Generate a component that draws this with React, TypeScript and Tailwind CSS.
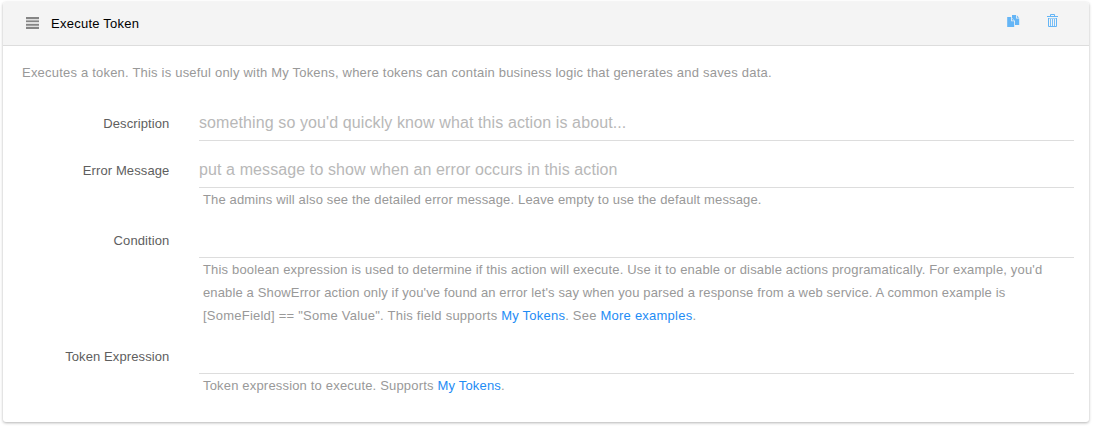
import type { ReactNode } from 'react';

function LinesIcon() {
  return (
    <svg className="mb-px" width="13" height="12" viewBox="0 0 13 12" fill="#858585" shapeRendering="crispEdges">
      <rect width="13" height="12" fill="#dedede" />
      <rect width="13" height="2" />
      <rect y="3" width="13" height="1" fill="#b0b0b0" />
      <rect y="4" width="13" height="1" />
      <rect y="7" width="13" height="1" />
      <rect y="8" width="13" height="1" fill="#a0a0a0" />
      <rect y="10" width="13" height="2" />
    </svg>
  );
}

function CopyIcon() {
  return (
    <svg width="13" height="12" viewBox="0 0 13 12" fill="#64b5f6">
      <path d="M5 0h4v3.5h3.2V10H8V6L5 3z" />
      <path d="M9.8 0.3L12 2.7H9.8z" />
      <path d="M0.2 2h4v4.3h3V12h-7z" />
      <path d="M5 3.4L7.2 5.6H5z" />
    </svg>
  );
}

function TrashIcon() {
  return (
    <svg width="12" height="13" viewBox="0 0 12 13" fill="none" stroke="#64b5f6">
      <path d="M0 2.5h11M3.5 2V0.5h4V2" />
      <path d="M1.5 4v8.5h8V4" />
      <path d="M1 4.5h9" strokeOpacity=".6" />
      <path d="M3.5 5v7M5.5 5v7M7.5 5v7" strokeOpacity=".85" />
    </svg>
  );
}

function Link({ children }: { children: ReactNode }) {
  return <a href="#" className="text-[#1e8cf5]">{children}</a>;
}

function Field({ label, placeholder, children }: { label: string; placeholder?: string; children?: ReactNode }) {
  return (
    <div className="flex">
      <label className="w-[166.4px] shrink-0 pt-[18px] text-right leading-[23px] tracking-[0.1px] text-[#5e5e5e]">{label}</label>
      <div className="ml-[29.6px] w-[875px]">
        <input
          placeholder={placeholder}
          aria-label={label}
          className="block h-[47px] w-full border-b border-[#dddddd] bg-transparent pt-[11px] text-base tracking-[0.105px] outline-none placeholder:text-[#b8b8b8]"
        />
        {children && <div className="pl-1 leading-[23px] whitespace-nowrap">{children}</div>}
      </div>
    </div>
  );
}

export default function App() {
  return (
    <div className="h-[426px] bg-white pt-[2px] pl-[3px] font-['Liberation_Sans',Arial,sans-serif] text-[13px] tracking-[0.16px] text-[#999999]">
      <section className="h-[420px] w-[1086px] overflow-hidden rounded-[3px] bg-white shadow-[0_1px_3px_rgba(0,0,0,0.3)]">
        <header className="flex h-11 items-center border-b border-[#dddddd] bg-[#f4f4f4] pl-[23px]">
          <LinesIcon />
          <h1 className="ml-3 tracking-[0.25px] text-black">Execute Token</h1>
          <div className="mr-[30px] mb-[6px] ml-auto flex items-end gap-[27px]">
            <button aria-label="Duplicate"><CopyIcon /></button>
            <button aria-label="Delete"><TrashIcon /></button>
          </div>
        </header>
        <p className="h-12 pt-[15px] pl-[19px] leading-[23px] tracking-[0.205px]">
          Executes a token. This is useful only with My Tokens, where tokens can contain business logic that generates and saves data.
        </p>
        <Field label="Description" placeholder="something so you'd quickly know what this action is about..." />
        <Field label="Error Message" placeholder="put a message to show when an error occurs in this action">
          <span className="tracking-[0.15px]">The admins will also see the detailed error message. Leave empty to use the default message.</span>
        </Field>
        <Field label="Condition">
          <span className="tracking-[0.167px]">This boolean expression is used to determine if this action will execute. Use it to enable or disable actions programatically. For example, you'd</span>
          <br />
          <span className="tracking-[0.14px]">enable a ShowError action only if you've found an error let's say when you parsed a response from a web service. A common example is</span>
          <br />
          <span className="tracking-[0.23px]">[SomeField] == "Some Value". This field supports <Link>My Tokens</Link>. See <Link>More examples</Link>.</span>
        </Field>
        <Field label="Token Expression">
          <span className="tracking-[0.18px]">Token expression to execute. Supports <Link>My Tokens</Link>.</span>
        </Field>
      </section>
    </div>
  );
}
